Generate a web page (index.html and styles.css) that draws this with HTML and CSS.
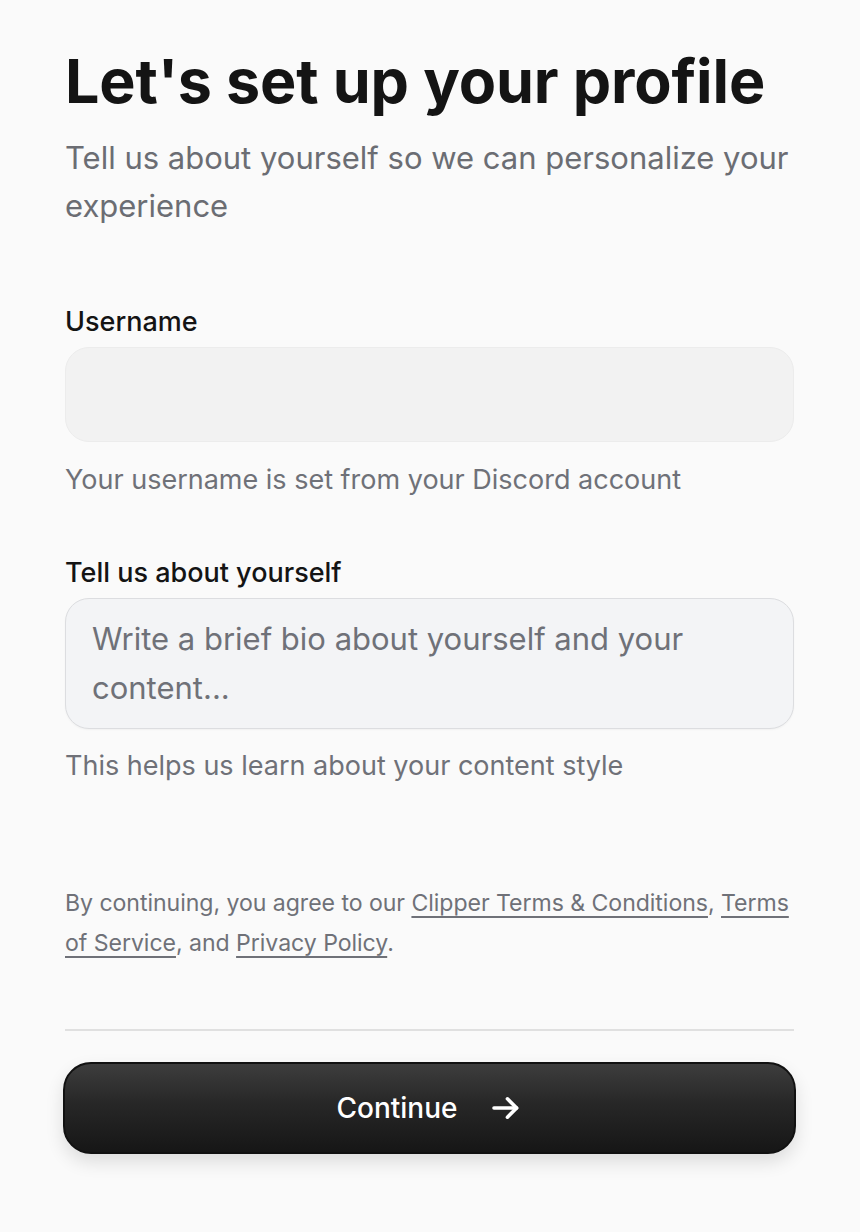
FILE: index.html
```html
<!DOCTYPE html>
<html lang="en">
<head>
<meta charset="utf-8">
<title>Set up your profile</title>
<link rel="stylesheet" href="styles.css">
</head>
<body>
<main class="page">
  <header class="intro">
    <h1 class="title">Let's set up your profile</h1>
    <p class="subtitle">Tell us about yourself so we can personalize your experience</p>
  </header>

  <section class="field field-username">
    <label class="label" for="username">Username</label>
    <div class="input" id="username"></div>
    <p class="hint">Your username is set from your Discord account</p>
  </section>

  <section class="field field-bio">
    <label class="label" for="bio">Tell us about yourself</label>
    <div class="textarea" id="bio"><span class="placeholder">Write a brief bio about yourself and your content...</span></div>
    <p class="hint">This helps us learn about your content style</p>
  </section>

  <p class="legal">By continuing, you agree to our <a href="#">Clipper Terms &amp; Conditions</a>, <a href="#">Terms of Service</a>, and <a href="#">Privacy Policy</a>.</p>

  <hr class="divider">

  <button class="continue" type="button">
    <span>Continue</span>
    <svg class="arrow" width="34" height="34" viewBox="0 0 24 24" fill="none" stroke="currentColor" stroke-width="2.5" stroke-linecap="round" stroke-linejoin="round"><path d="M3.5 12h16"/><path d="M13 5.5l6.5 6.5-6.5 6.5"/></svg>
  </button>
</main>
</body>
</html>
```

FILE: styles.css
```css
* { box-sizing: border-box; }
html, body { margin: 0; padding: 0; }
html { background: #fafafa; }
body {
  background: #fafafa;
  font-family: Inter, "Noto Sans", sans-serif;
  color: #111;
  min-height: 1232px;
}
.page {
  padding: 49px 66px 60px 65px;
  display: flex;
  flex-direction: column;
}
.title {
  margin: 0;
  font-size: 61px;
  line-height: 64px;
  font-weight: 700;
  letter-spacing: -0.15px;
  color: #141414;
}
.subtitle {
  margin: 21px 0 0;
  font-size: 31px;
  line-height: 48px;
  color: #6b6d73;
  font-weight: 400;
}
.field { display: flex; flex-direction: column; }
.field-username { margin-top: 76px; }
.field-bio { margin-top: 59px; }
.label {
  font-size: 27px;
  line-height: 32px;
  font-weight: 500;
  color: #141414;
  margin-bottom: 9px;
}
.input {
  height: 95px;
  border-radius: 24px;
  background: #f2f2f2;
  border: 1px solid #ececec;
}
.textarea {
  height: 131px;
  border-radius: 24px;
  background: #f3f4f6;
  border: 1.5px solid #dcdde0;
  padding: 15px 26px;
  box-shadow: 0 1px 2px rgba(0,0,0,0.04);
}
.placeholder {
  font-size: 31px;
  line-height: 49px;
  color: #6f7178;
}
.hint {
  margin: 20px 0 0;
  font-size: 27px;
  line-height: 36px;
  color: #6f7178;
}
.field-bio .hint { margin-top: 19px; }
.legal {
  margin: 99px -4px 0 0;
  font-size: 23.1px;
  line-height: 40px;
  letter-spacing: -0.05px;
  color: #6f7178;
}
.legal a {
  color: #6f7178;
  text-decoration: underline;
  text-decoration-thickness: 2px;
  text-underline-offset: 5px;
}
.divider {
  margin: 66px 0 0;
  border: 0;
  height: 2px;
  background: #e0e0e0;
}
.continue {
  margin: 31px -2px 0;
  height: 92px;
  border-radius: 28px;
  border: 2px solid #111;
  background: linear-gradient(180deg, #3d3d3d 0%, #272727 45%, #161616 100%);
  box-shadow: 0 8px 18px rgba(0,0,0,0.12);
  color: #fff;
  font-family: Inter, "Noto Sans", sans-serif;
  font-size: 28px;
  font-weight: 500;
  display: flex;
  align-items: center;
  justify-content: center;
  gap: 31px;
  padding: 0;
}
.arrow { display: block; }
```
